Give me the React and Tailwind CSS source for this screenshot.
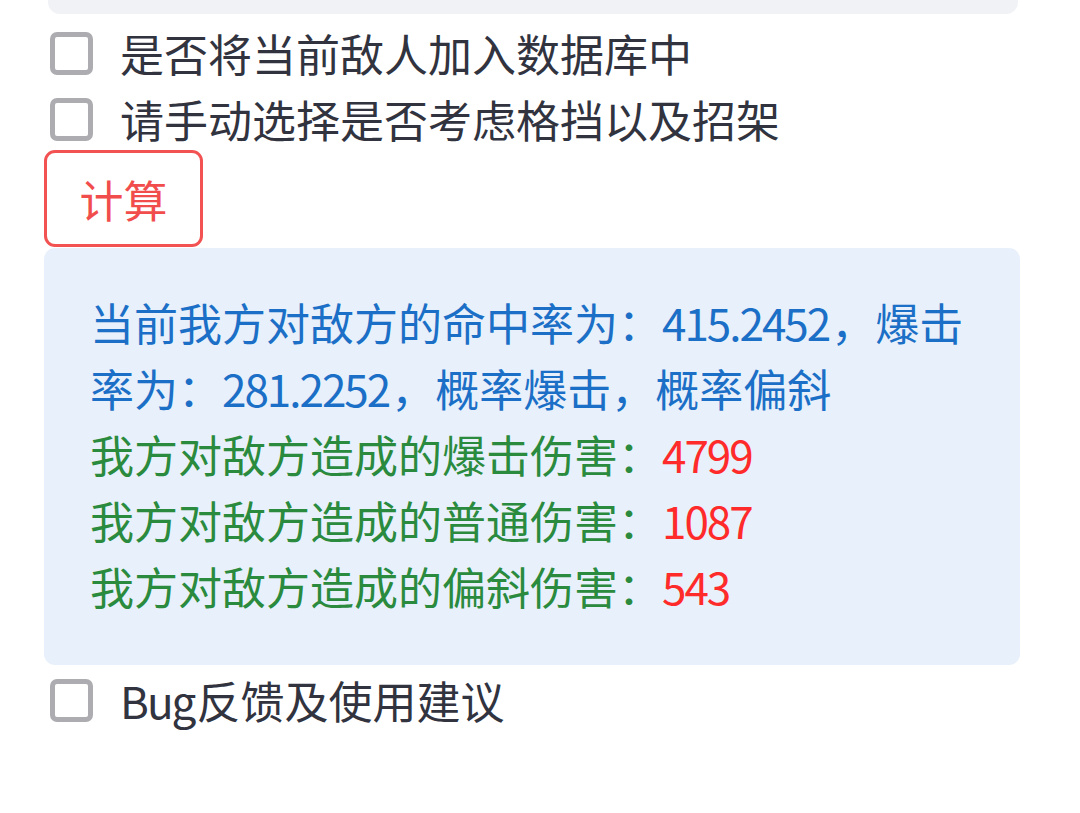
import React from 'react';

const FONT = { fontFamily: '"Noto Sans CJK SC", "Noto Sans", sans-serif' };

// latin runs sit a little tighter than the CJK glyphs
function Latin({ children }) {
  return <span className="tracking-[-2px] mr-[2px]">{children}</span>;
}

function Checkbox({ label }) {
  return (
    <label className="flex items-center h-[66px] cursor-pointer">
      <span className="ml-[6px] w-[43px] h-[43px] shrink-0 rounded-[7px] border-[5px] border-[#adadb1] bg-white" />
      <span className="ml-[27px] text-[44px] leading-[66px] text-[#31333f]">{label}</span>
    </label>
  );
}

function DamageLine({ label, value }) {
  return (
    <div>
      <span className="text-[#2a8a3e]">{label}</span>
      <span className="text-[#ff2b2b]">
        <Latin>{value}</Latin>
      </span>
    </div>
  );
}

export default function App() {
  return (
    <div className="w-[1080px] h-[813px] bg-white overflow-hidden" style={FONT}>
      <div className="ml-[48px] w-[970px] h-[14px] bg-[#f0f2f6] rounded-b-[12px]" />

      <div className="ml-[44px] w-[976px] mt-[6px]">
        <Checkbox label="是否将当前敌人加入数据库中" />
        <Checkbox label="请手动选择是否考虑格挡以及招架" />

        <button
          type="button"
          className="mt-[-2px] w-[159px] h-[97px] rounded-[11px] border-[3px] border-[#f25252] bg-white text-[44px] text-[#f24d4d] flex items-center justify-center"
        >
          计算
        </button>

        <div className="mt-[1px] rounded-[11px] bg-[#e8f1fb] px-[46px] pt-[41px] pb-[46px] text-[44px] leading-[66px]">
          <div className="text-[#1b6fc6]">
            <div>
              <span>当前我方对敌方的命中率为：</span>
              <Latin>415.2452</Latin>
              <span>，爆击</span>
            </div>
            <div>
              <span>率为：</span>
              <Latin>281.2252</Latin>
              <span>，概率爆击，概率偏斜</span>
            </div>
          </div>
          <DamageLine label="我方对敌方造成的爆击伤害：" value="4799" />
          <DamageLine label="我方对敌方造成的普通伤害：" value="1087" />
          <DamageLine label="我方对敌方造成的偏斜伤害：" value="543" />
        </div>

        <div className="mt-[2px]">
          <Checkbox
            label={
              <>
                <Latin>Bug</Latin>反馈及使用建议
              </>
            }
          />
        </div>
      </div>
    </div>
  );
}
